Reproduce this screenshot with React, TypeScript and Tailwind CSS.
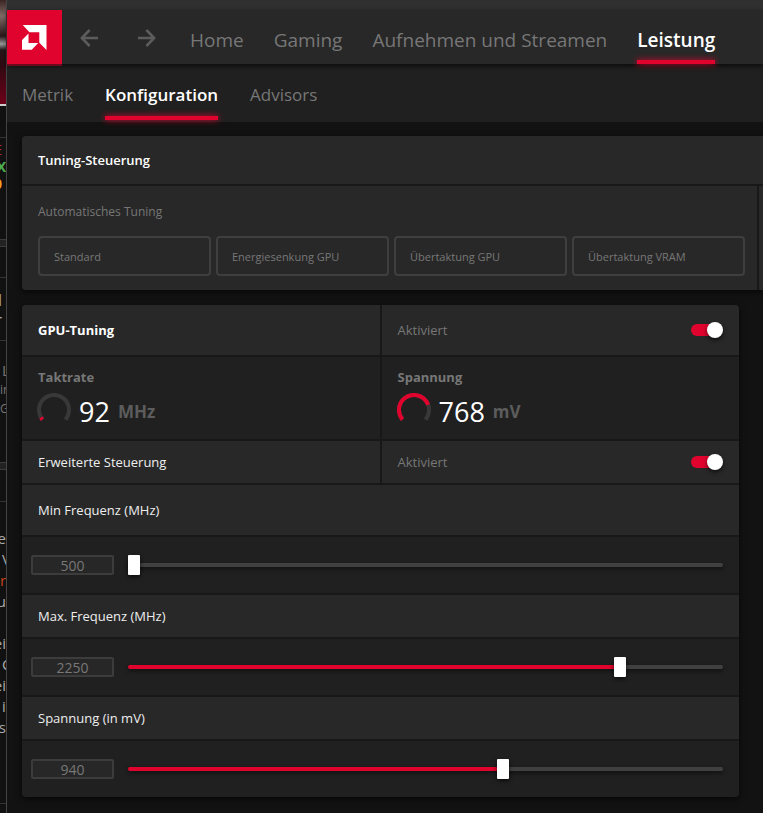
import React, { useState } from "react";
import clsx from "clsx";

/* ------------------------------------------------------------------ */
/*  Types & constants                                                   */
/* ------------------------------------------------------------------ */
type Tab = { label: string; active?: boolean };

const NAV_TABS: Tab[] = [
  { label: "Home" },
  { label: "Gaming" },
  { label: "Aufnehmen und Streamen" },
  { label: "Leistung", active: true },
];

const SUB_TABS: Tab[] = [
  { label: "Metrik" },
  { label: "Konfiguration", active: true },
  { label: "Advisors" },
];

const PRESETS = ["Standard", "Energiesenkung GPU", "Übertaktung GPU", "Übertaktung VRAM"];

const POST_LINES = [
  { text: "e" },
  { text: "V", className: "self-start pl-0.5" },
  { text: "re", className: "self-start text-[#c8421a]" },
  { text: "u" },
  { text: "" },
  { text: "ei" },
  { text: "C", className: "self-start pl-0.5" },
  { text: "ei" },
  { text: "ic", className: "self-start pl-0.5" },
  { text: "us" },
];

/* ------------------------------------------------------------------ */
/*  Icons                                                               */
/* ------------------------------------------------------------------ */
function AmdLogo() {
  return (
    <svg viewBox="0 0 25 25" className="w-[25px] h-[25px]" fill="#fff" aria-hidden="true">
      <path d="M.7 0H24.5V25L17.3 17.8V7.2H7.5Z" />
      <path d="M0 15L6.5 8.5V18H16.2L9.8 24.7H0Z" />
    </svg>
  );
}

function Arrow({ className }: { className?: string }) {
  return (
    <svg
      viewBox="0 0 18 18"
      className={clsx("w-[18px] h-[18px]", className)}
      fill="none"
      stroke="#5c5c5c"
      strokeWidth="2.6"
      aria-hidden="true"
    >
      <path d="M9.6 1L1.9 9l7.7 8M2 9h16" />
    </svg>
  );
}

function Gauge({ percent }: { percent: number }) {
  const arc = "M5.5 26.6A15 15 0 1 1 28.5 26.6";
  return (
    <svg viewBox="0 0 34 34" className="w-[34px] h-[34px]" fill="none" strokeWidth="4" aria-hidden="true">
      <path d={arc} stroke="#383838" />
      <path d={arc} stroke="#e0032d" pathLength={100} strokeDasharray={`${percent} 100`} />
    </svg>
  );
}

/* ------------------------------------------------------------------ */
/*  Controls                                                            */
/* ------------------------------------------------------------------ */
function TabLink({ label, active, className }: Tab & { className?: string }) {
  return (
    <a
      href="#"
      className={clsx(
        "flex flex-col justify-between whitespace-nowrap",
        active ? "font-semibold text-white" : "text-[#777]",
        className
      )}
    >
      {label}
      {active && <span className="h-1 bg-[#e0032d] shadow-[0_0_6px_#e0032d]" />}
    </a>
  );
}

function Toggle({ id }: { id: string }) {
  const [on, setOn] = useState(true);
  return (
    <div className="flex flex-1 items-center justify-between px-4 bg-[#282828]">
      <label htmlFor={id} className="pt-0.5 text-[#777]">
        Aktiviert
      </label>
      <input
        id={id}
        type="checkbox"
        checked={on}
        onChange={() => setOn(!on)}
        className="appearance-none grid items-center w-8 h-4 cursor-pointer
          before:col-start-1 before:row-start-1 before:h-3 before:w-7 before:rounded-full before:bg-[#444] checked:before:bg-[#e0032d]
          after:col-start-1 after:row-start-1 after:size-4 after:rounded-full after:bg-white after:shadow-[0_2px_4px_#000a] checked:after:justify-self-end"
      />
    </div>
  );
}

function Reading({
  label,
  value,
  unit,
  percent,
}: {
  label: string;
  value: number;
  unit: string;
  percent: number;
}) {
  return (
    <div className="h-[82px] pl-4 pt-2.5 bg-[#202020]">
      <p className="font-bold text-[#777] leading-5">{label}</p>
      <div className="flex items-center -ml-px mt-[3px]">
        <Gauge percent={percent} />
        <span className="ml-2 pt-1 text-[27px] leading-9 text-white">{value}</span>
        <span className="ml-2 pt-1 text-[17px] leading-9 font-bold text-[#5c5c5c]">{unit}</span>
      </div>
    </div>
  );
}

function SliderRow({
  id,
  label,
  min,
  max,
  initial,
  tall,
}: {
  id: string;
  label: string;
  min: number;
  max: number;
  initial: number;
  tall?: boolean;
}) {
  const [value, setValue] = useState(initial);
  const fill = ((value - min) / (max - min)) * 100;

  return (
    <>
      <label
        htmlFor={id}
        className={clsx("flex items-center pl-4 pt-0.5 bg-[#282828] text-[#eee]", tall ? "h-[50px]" : "h-[42px]")}
      >
        {label}
      </label>
      <div className="flex items-center gap-3.5 h-14 pl-[9px] pr-4 bg-[#202020]">
        <input
          id={id}
          type="text"
          value={value}
          onChange={(e) => setValue(Number(e.target.value) || min)}
          className="w-[83px] h-5 border-2 border-[#3c3c3c] rounded-xs bg-[#272727] text-center text-sm leading-4 text-[#777] outline-none"
        />
        <input
          type="range"
          aria-label={label}
          min={min}
          max={max}
          value={value}
          onChange={(e) => setValue(Number(e.target.value))}
          style={{ "--fill": `${fill}%` } as React.CSSProperties}
          className="appearance-none flex-1 min-w-0 h-5 bg-transparent cursor-pointer
            [&::-webkit-slider-runnable-track]:h-1 [&::-webkit-slider-runnable-track]:rounded-xs
            [&::-webkit-slider-runnable-track]:bg-[linear-gradient(to_right,#e0032d_var(--fill),#404040_var(--fill))]
            [&::-webkit-slider-runnable-track]:shadow-[0_2px_4px_#0008]
            [&::-webkit-slider-thumb]:appearance-none [&::-webkit-slider-thumb]:w-3 [&::-webkit-slider-thumb]:h-5
            [&::-webkit-slider-thumb]:-mt-2 [&::-webkit-slider-thumb]:rounded-[1px] [&::-webkit-slider-thumb]:bg-white
            [&::-webkit-slider-thumb]:shadow-[0_2px_4px_#000a]"
        />
      </div>
    </>
  );
}

/* ------------------------------------------------------------------ */
/*  Page behind the window                                              */
/* ------------------------------------------------------------------ */
function BackgroundPage() {
  return (
    <aside className="w-[7px] shrink-0 overflow-hidden border-r border-[#444] bg-[#111] text-[#aaa] text-[15px]">
      <div className="h-[104px] bg-[linear-gradient(to_bottom,#3a2422_0px,#806a66_16px,#2a1618_36px,#999_44px,#241618_50px,#300a12_66px,#6e0018_104px)]" />
      <div className="h-0.5 bg-[#ccc]" />
      <div className="h-8 border-b border-[#333]" />
      <div className="h-[101px] pt-[3px] flex flex-col items-end leading-[17px] text-sm">
        <span className="pr-1 text-[#b03030]">E</span>
        <span className="font-bold text-[#4caf50]">X</span>
        <span className="pr-1 font-bold text-[#f0a020]">0</span>
      </div>
      <div className="h-2 border-y border-[#3c3c3c] bg-[#222]" />
      <div className="h-[31px] border-b border-[#333]" />
      <div className="h-[63px] pt-3 flex flex-col items-end border-b border-[#333] text-base leading-5">
        <span className="pr-1">d</span>
        <span className="pr-1">r</span>
      </div>
      <div className="h-[121px] pt-5 flex flex-col items-start leading-[19px] text-[#777]">
        <span className="pl-0.5">L</span>
        <span className="text-xs leading-[19px]">in</span>
        <span className="text-xs leading-[19px]">G</span>
      </div>
      <div className="h-2 border-y border-[#3c3c3c] bg-[#222]" />
      <div className="h-8 border-b border-[#333]" />
      <div className="h-[302px] pt-[26px] flex flex-col items-end border-b border-[#333]">
        {POST_LINES.map((line, i) => (
          <span key={i} className={clsx("h-[21px] leading-[21px]", line.className)}>
            {line.text}
          </span>
        ))}
      </div>
    </aside>
  );
}

/* ------------------------------------------------------------------ */
/*  App                                                                 */
/* ------------------------------------------------------------------ */
export default function App() {
  return (
    <div className="flex min-h-screen bg-[#121212] font-['Open_Sans',sans-serif] text-[13px]">
      <BackgroundPage />

      <div className="flex-1 min-w-0">
        <div className="h-2.5 bg-[#303030]" />

        <header className="relative flex h-[54px] bg-[#282828] shadow-[0_2px_5px_#000a]">
          <a
            href="#"
            aria-label="AMD"
            className="flex items-center justify-center w-[55px] shrink-0 bg-[#e0032d] shadow-[0_2px_0_#6d0a1d]"
          >
            <AmdLogo />
          </a>
          <div className="flex gap-10 ml-[18px] pt-[19px]">
            <button aria-label="Zurück" className="h-[18px]">
              <Arrow />
            </button>
            <button aria-label="Vorwärts" className="h-[18px]">
              <Arrow className="-scale-x-100" />
            </button>
          </div>
          <nav className="flex gap-[30px] ml-[34px] text-[19px] leading-7">
            {NAV_TABS.map((t) => (
              <TabLink key={t.label} {...t} className="pt-4" />
            ))}
          </nav>
        </header>

        <nav className="flex gap-8 h-[58px] pl-[15px] pb-0.5 bg-[#202020] text-[17px] leading-6">
          {SUB_TABS.map((t) => (
            <TabLink key={t.label} {...t} className="pt-[19px]" />
          ))}
        </nav>

        <main className="py-3.5 pl-[15px]">
          <section className="flex flex-col gap-0.5 rounded-l overflow-hidden bg-[#181818] shadow-[0_2px_6px_#000a]">
            <h2 className="flex items-center h-12 pl-4 pt-0.5 bg-[#282828] font-semibold text-white">
              Tuning-Steuerung
            </h2>
            <div className="flex gap-0.5">
              <div className="flex-1 h-[104px] pl-4 pr-3 pt-[17px] bg-[#282828]">
                <p className="text-xs leading-[18px] text-[#777]">Automatisches Tuning</p>
                <div className="grid grid-cols-4 gap-[5px] mt-[15px]">
                  {PRESETS.map((p) => (
                    <button
                      key={p}
                      className="h-10 pl-3.5 pt-0.5 border-2 border-[#3f3f3f] rounded text-left text-[11px] text-[#777] whitespace-nowrap"
                    >
                      {p}
                    </button>
                  ))}
                </div>
              </div>
              <div className="w-1 bg-[#282828]" />
            </div>
          </section>

          <section className="flex flex-col gap-0.5 mt-[15px] mr-6 rounded overflow-hidden bg-[#181818] shadow-[0_2px_6px_#000a]">
            <div className="grid grid-cols-2 gap-0.5 h-[50px]">
              <h2 className="flex items-center pl-4 pt-0.5 bg-[#282828] font-bold text-white">GPU-Tuning</h2>
              <Toggle id="gpu-tuning" />
            </div>
            <div className="grid grid-cols-2 gap-0.5">
              <Reading label="Taktrate" value={92} unit="MHz" percent={4} />
              <Reading label="Spannung" value={768} unit="mV" percent={77} />
            </div>
            <div className="grid grid-cols-2 gap-0.5 h-[42px]">
              <h3 className="flex items-center pl-4 pt-0.5 bg-[#282828] text-[#eee]">Erweiterte Steuerung</h3>
              <Toggle id="advanced-control" />
            </div>
            <SliderRow id="min-freq" label="Min Frequenz (MHz)" min={500} max={2600} initial={500} tall />
            <SliderRow id="max-freq" label="Max. Frequenz (MHz)" min={500} max={2600} initial={2250} />
            <SliderRow id="voltage" label="Spannung (in mV)" min={750} max={1050} initial={940} />
          </section>
        </main>
      </div>
    </div>
  );
}
